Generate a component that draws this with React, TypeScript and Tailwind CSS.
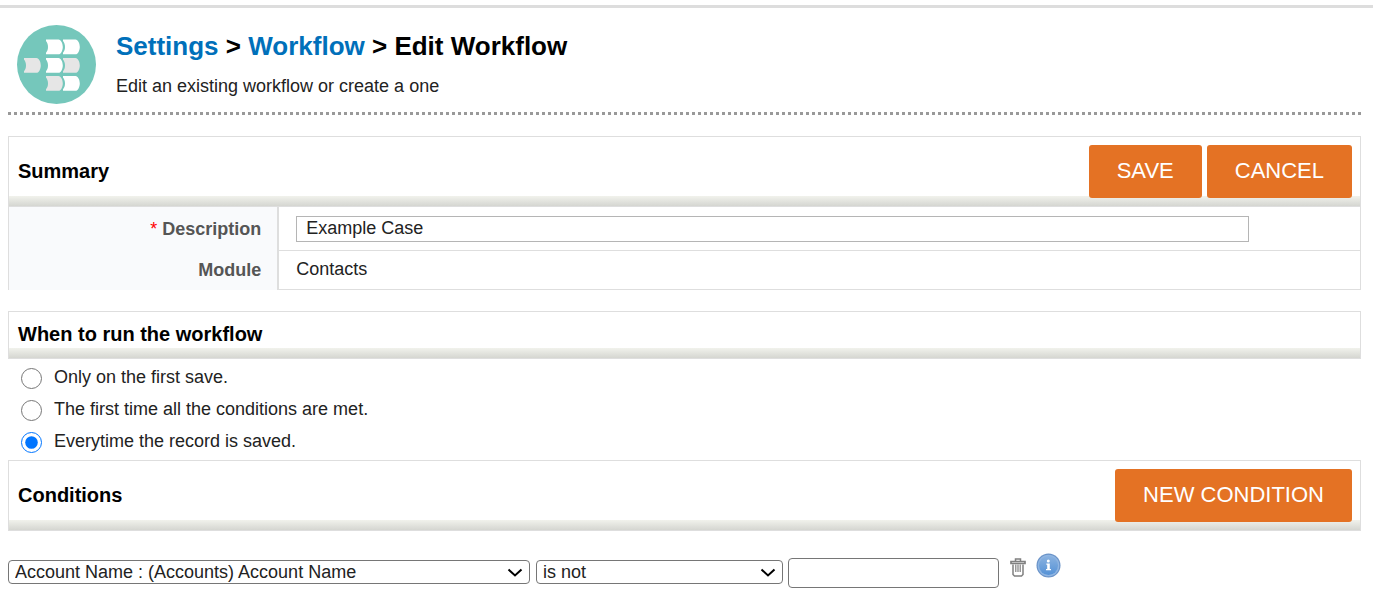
import React, { useState } from 'react'

const RUN_OPTIONS = [
  { key: 'first-save', label: 'Only on the first save.' },
  { key: 'first-met', label: 'The first time all the conditions are met.' },
  { key: 'every-save', label: 'Everytime the record is saved.' },
]

// rows of the workflow badge, x / y / fill of each chevron block
const BLOCKS = [
  { x: 29, y: 14.5, fill: '#ffffff' },
  { x: 46, y: 14.5, fill: '#ffffff' },
  { x: 7, y: 33, fill: '#e6e6e6' },
  { x: 29, y: 33, fill: '#ffffff' },
  { x: 46, y: 33, fill: '#e6e6e6' },
  { x: 29, y: 51, fill: '#e6e6e6' },
  { x: 46, y: 51, fill: '#ffffff' },
]

const WorkflowIcon: React.FC = () => (
  <svg width="79" height="79" viewBox="0 0 79 79" aria-hidden="true">
    <circle cx="39.5" cy="39.5" r="39.5" fill="#75c7bb" />
    {BLOCKS.map((b, i) => (
      <path
        key={i}
        transform={`translate(${b.x} ${b.y})`}
        d="M0 0h12.500c2.500 0 4.300 4 4.300 7.500s-1.800 7.300-4.300 7.300H0v-1.500c1.300-1.500 2-3.500 2-5.800S1.300 3 0 1.500z"
        fill={b.fill}
      />
    ))}
  </svg>
)

const TrashIcon: React.FC = () => (
  <svg width="16" height="19" viewBox="0 0 16 19" fill="none" stroke="#808080" aria-hidden="true">
    <path d="M5.500 3V1h5v2" strokeWidth="1.500" />
    <path d="M1 5.500V3.500h14v2z" strokeWidth="1.700" />
    <path d="M3 6.500v10L4.500 18h7l1.500-1.500v-10" strokeWidth="1.500" />
    <path d="M5.800 6.500v7.500M8 6.500v7.500M10.200 6.500v7.500" strokeWidth="1.200" />
  </svg>
)

const InfoIcon: React.FC = () => (
  <svg width="25" height="25" viewBox="0 0 25 25" aria-hidden="true">
    <defs>
      <linearGradient id="info-fill" x1="0" y1="0" x2="0" y2="1">
        <stop offset="0" stopColor="#8ab2e0" />
        <stop offset="1" stopColor="#5592d6" />
      </linearGradient>
    </defs>
    <circle cx="12.500" cy="12.500" r="12" fill="#6a93c8" />
    <circle cx="12.500" cy="12.500" r="10.800" fill="#8fb5e2" />
    <circle cx="12.500" cy="12.500" r="9.500" fill="url(#info-fill)" />
    <circle cx="12.300" cy="8" r="1.500" fill="#fff" />
    <path d="M10.300 10.500h3.500v5.500h1.200v1.300h-5v-1.300h1.200v-4.200h-.9z" fill="#fff" />
  </svg>
)

const Button: React.FC<{ children: React.ReactNode }> = ({ children }) => (
  <button
    type="button"
    className="h-[53px] rounded-[3px] bg-[#e47224] px-7 pb-[2px] text-[22px] leading-[51px] text-white"
  >
    {children}
  </button>
)

const SectionHeader: React.FC<{ title: string; children?: React.ReactNode }> = ({
  title,
  children,
}) => (
  <div className="border border-[#dedede] bg-[linear-gradient(to_bottom,#f1f2ec,#d5d6d1)] bg-[length:100%_10px] bg-bottom bg-no-repeat">
    <div className="flex items-center justify-between py-2 pr-2 pl-[9px]">
      <h2 className="pb-[2px] text-[20px] leading-7 font-bold text-black">{title}</h2>
      {children && <div className="flex gap-[5px]">{children}</div>}
    </div>
  </div>
)

const Dropdown: React.FC<{ label: string; options: string[]; className: string }> = ({
  label,
  options,
  className,
}) => (
  <div className={`relative ${className}`}>
    <select
      aria-label={label}
      className="block h-6 w-full appearance-none rounded-[4px] border border-[#767676] bg-white pr-8 pl-[6px] text-[18px] leading-[22px]"
    >
      {options.map((o) => (
        <option key={o}>{o}</option>
      ))}
    </select>
    <svg
      className="pointer-events-none absolute top-2 right-[7px]"
      width="16"
      height="10"
      viewBox="0 0 16 10"
      fill="none"
      stroke="#000"
      strokeWidth="2"
      aria-hidden="true"
    >
      <path d="M1.500 1.500L8 7.500l6.500-6" />
    </svg>
  </div>
)

const App: React.FC = () => {
  const [description, setDescription] = useState('Example Case')
  const [runOn, setRunOn] = useState('every-save')
  const [value, setValue] = useState('')

  return (
    <div className="bg-white pt-[5px] font-['Liberation_Sans',Arial,sans-serif] text-[18px] leading-6 text-[#222]">
      <div className="h-[3px] bg-[#dddddd]" />
      <main className="pr-3 pl-2">
        <header className="flex items-start gap-5 pt-[17px] pb-2 pl-[9px]">
          <WorkflowIcon />
          <div className="pt-[5px]">
            <h1 className="text-[26px] leading-8 font-bold text-black">
              <a href="#settings" className="text-[#0070ba]">
                Settings
              </a>
              {' > '}
              <a href="#workflow" className="text-[#0070ba]">
                Workflow
              </a>
              {' > Edit Workflow'}
            </h1>
            <p className="pt-3 leading-6">Edit an existing workflow or create a one</p>
          </div>
        </header>
        <div className="h-[3px] bg-[repeating-linear-gradient(to_right,#999_0_3px,transparent_3px_6px)]" />

        <section className="mt-[21px]">
          <SectionHeader title="Summary">
            <Button>SAVE</Button>
            <Button>CANCEL</Button>
          </SectionHeader>
          <table className="w-full border-separate border-spacing-0 border-x border-[#dedede]">
            <tbody>
              <tr className="h-11">
                <th className="w-1/5 border-r-2 border-[#dedede] bg-[#f9fafc] pr-4 text-right font-bold text-[#555]">
                  <label htmlFor="description">
                    <span className="font-normal text-[#ff0000]">*</span> Description
                  </label>
                </th>
                <td className="border-b border-[#dedede] px-[17px]">
                  <input
                    id="description"
                    type="text"
                    value={description}
                    onChange={(e) => setDescription(e.target.value)}
                    className="block h-[26px] w-[91%] border border-[#b5b5b5] bg-white px-[9px]"
                  />
                </td>
              </tr>
              <tr className="h-[39px]">
                <th className="border-r-2 border-[#dedede] bg-[#f9fafc] pr-4 pb-[2px] text-right font-bold text-[#555]">
                  Module
                </th>
                <td className="border-b border-[#dedede] px-[17px] pb-[2px]">Contacts</td>
              </tr>
            </tbody>
          </table>
        </section>

        <section className="mt-[21px]">
          <SectionHeader title="When to run the workflow" />
          <div className="pt-[2px] pb-[3px] pl-[13px]">
            {RUN_OPTIONS.map((o) => (
              <label key={o.key} className="flex h-8 items-start gap-3">
                <input
                  type="radio"
                  name="run-on"
                  checked={runOn === o.key}
                  onChange={() => setRunOn(o.key)}
                  className="mt-[7px] h-[21px] w-[21px] accent-[#0075ff]"
                />
                <span className="pt-1">{o.label}</span>
              </label>
            ))}
          </div>
        </section>

        <section>
          <SectionHeader title="Conditions">
            <Button>NEW CONDITION</Button>
          </SectionHeader>
          <div className="flex items-start pt-[22px]">
            <Dropdown
              label="Field"
              options={['Account Name : (Accounts) Account Name']}
              className="mt-[7px] w-[522px]"
            />
            <Dropdown label="Operator" options={['is not']} className="mt-[7px] ml-[6px] w-[247px]" />
            <input
              type="text"
              aria-label="Value"
              value={value}
              onChange={(e) => setValue(e.target.value)}
              className="mt-[5px] ml-[5px] h-[30px] w-[211px] rounded-[4px] border border-[#767676] bg-white px-2"
            />
            <button type="button" aria-label="Delete condition" className="mt-[5px] ml-[11px]">
              <TrashIcon />
            </button>
            <button type="button" aria-label="Condition help" className="ml-[10px]">
              <InfoIcon />
            </button>
          </div>
        </section>
      </main>
    </div>
  )
}

export default App
